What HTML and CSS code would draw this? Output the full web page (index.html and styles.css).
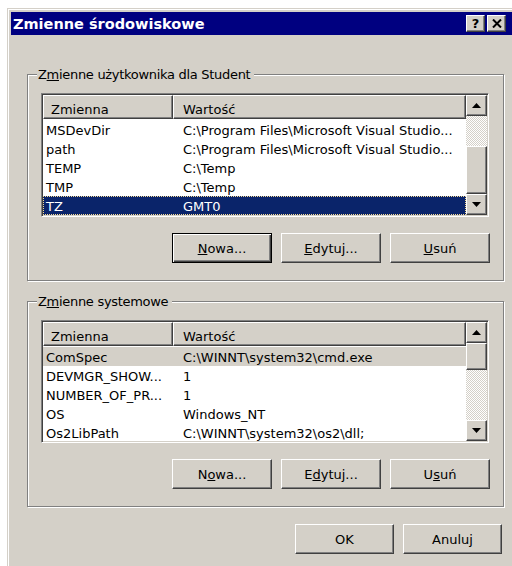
FILE: index.html
```html
<!DOCTYPE html>
<html lang="pl">
<head>
<meta charset="utf-8">
<title>Zmienne środowiskowe</title>
<link rel="stylesheet" href="styles.css">
</head>
<body>
<div class="window">
  <div class="titlebar">
    <span class="title">Zmienne środowiskowe</span>
    <div class="caption-buttons">
      <button class="cap">?</button>
      <button class="cap">
        <svg width="10" height="9" viewBox="0 0 10 9"><path d="M1 0.5 L9 8.5 M9 0.5 L1 8.5" stroke="#000" stroke-width="2" fill="none"/></svg>
      </button>
    </div>
  </div>

  <div class="client">
    <section class="group group-user">
      <div class="group-label">Z<u>m</u>ienne użytkownika dla Student</div>
      <div class="listview">
        <div class="lv-main">
          <div class="lv-header">
            <div class="hd c1">Zmienna</div>
            <div class="hd c2">Wartość</div>
          </div>
          <div class="lv-rows">
            <div class="row"><span class="c1">MSDevDir</span><span class="c2">C:\Program Files\Microsoft Visual Studio...</span></div>
            <div class="row"><span class="c1">path</span><span class="c2">C:\Program Files\Microsoft Visual Studio...</span></div>
            <div class="row"><span class="c1">TEMP</span><span class="c2">C:\Temp</span></div>
            <div class="row"><span class="c1">TMP</span><span class="c2">C:\Temp</span></div>
            <div class="row selected"><span class="c1">TZ</span><span class="c2">GMT0</span></div>
          </div>
        </div>
        <div class="vscroll">
          <div class="sb-btn"><svg width="9" height="5" viewBox="0 0 9 5"><path d="M4.5 0 L9 5 L0 5 Z" fill="#000"/></svg></div>
          <div class="sb-track"></div>
          <div class="sb-thumb thumb-user"></div>
          <div class="sb-btn"><svg width="9" height="5" viewBox="0 0 9 5"><path d="M0 0 L9 0 L4.5 5 Z" fill="#000"/></svg></div>
        </div>
      </div>
      <div class="btn-row">
        <button class="btn default"><u>N</u>owa...</button>
        <button class="btn"><u>E</u>dytuj...</button>
        <button class="btn"><u>U</u>suń</button>
      </div>
    </section>

    <section class="group group-system">
      <div class="group-label">Z<u>m</u>ienne systemowe</div>
      <div class="listview listview-system">
        <div class="lv-main">
          <div class="lv-header">
            <div class="hd c1">Zmienna</div>
            <div class="hd c2">Wartość</div>
          </div>
          <div class="lv-rows">
            <div class="row inactive"><span class="c1">ComSpec</span><span class="c2">C:\WINNT\system32\cmd.exe</span></div>
            <div class="row"><span class="c1">DEVMGR_SHOW...</span><span class="c2">1</span></div>
            <div class="row"><span class="c1">NUMBER_OF_PR...</span><span class="c2">1</span></div>
            <div class="row"><span class="c1">OS</span><span class="c2">Windows_NT</span></div>
            <div class="row"><span class="c1">Os2LibPath</span><span class="c2">C:\WINNT\system32\os2\dll;</span></div>
          </div>
        </div>
        <div class="vscroll">
          <div class="sb-btn"><svg width="9" height="5" viewBox="0 0 9 5"><path d="M4.5 0 L9 5 L0 5 Z" fill="#000"/></svg></div>
          <div class="sb-thumb thumb-system"></div>
          <div class="sb-track"></div>
          <div class="sb-btn"><svg width="9" height="5" viewBox="0 0 9 5"><path d="M0 0 L9 0 L4.5 5 Z" fill="#000"/></svg></div>
        </div>
      </div>
      <div class="btn-row">
        <button class="btn">N<u>o</u>wa...</button>
        <button class="btn">E<u>d</u>ytuj...</button>
        <button class="btn">U<u>s</u>uń</button>
      </div>
    </section>

    <div class="dialog-buttons">
      <button class="btn btn-dialog">OK</button>
      <button class="btn btn-dialog">Anuluj</button>
    </div>
  </div>
</div>
</body>
</html>
```
FILE: styles.css
```css
html, body {
  margin: 0;
  padding: 0;
  width: 512px;
  height: 566px;
  overflow: hidden;
  background: #fff;
}

body {
  font-family: "DejaVu Sans", Verdana, sans-serif;
  font-size: 13px;
  color: #000;
}

/* dialog frame */
.window {
  box-sizing: border-box;
  margin: 8px 0 0 7px;
  width: 510px;
  height: 580px;
  padding: 3px;
  background: #d4d0c8;
  border: 1px solid;
  border-color: #d4d0c8 #404040 #404040 #d4d0c8;
  box-shadow: inset 1px 1px #fff, inset -1px -1px #808080;
  display: flex;
  flex-direction: column;
}

.titlebar {
  height: 23px;
  flex: none;
  background: #000080;
  color: #fff;
  display: flex;
  align-items: flex-start;
  padding: 0 7px 0 2px;
}

.title {
  flex: 1;
  font-weight: bold;
  font-size: 14.5px;
  line-height: 21px;
  padding-top: 2px;
  white-space: nowrap;
}

.caption-buttons {
  display: flex;
  gap: 2px;
  margin-top: 3px;
}

.cap {
  width: 19px;
  height: 17px;
  box-sizing: border-box;
  padding: 0;
  background: #d4d0c8;
  border: 1px solid;
  border-color: #fff #404040 #404040 #fff;
  box-shadow: inset -1px -1px #808080;
  display: flex;
  align-items: center;
  justify-content: center;
  font: bold 13px "DejaVu Sans", sans-serif;
  color: #000;
}

.client {
  flex: 1;
  padding-left: 16px;
  display: flex;
  flex-direction: column;
  align-items: flex-start;
}

/* etched group boxes */
.group {
  width: 477px;
  box-sizing: border-box;
  border: 1px solid #808080;
  box-shadow: inset 1px 1px #fff, 1px 1px #fff;
  padding: 0 13px 17px 13px;
}

.group-user { margin-top: 39px; }
.group-system { margin-top: 20px; }

.group-label {
  width: max-content;
  margin: -8px 0 0 -4px;
  padding: 0 4px 0 1px;
  line-height: 15px;
  letter-spacing: -0.3px;
  background: #d4d0c8;
  white-space: nowrap;
}

/* list views */
.listview {
  margin-top: 11px;
  width: 448px;
  height: 124px;
  box-sizing: border-box;
  padding: 1px;
  background: #fff;
  border: 1px solid;
  border-color: #808080 #fff #fff #808080;
  box-shadow: inset 1px 1px #404040, inset -1px -1px #d4d0c8;
  display: flex;
}

.listview-system { height: 123px; }

.lv-main {
  flex: 1;
  display: flex;
  flex-direction: column;
  min-width: 0;
}

.lv-header {
  display: flex;
  height: 24px;
  flex: none;
}

.hd {
  box-sizing: border-box;
  background: #d4d0c8;
  border: 1px solid;
  border-color: #fff #404040 #404040 #fff;
  box-shadow: inset -1px -1px #808080;
  padding: 5px 0 0 7px;
  line-height: 18px;
  white-space: nowrap;
}

.hd.c1 { width: 130px; }
.hd.c2 { flex: 1; padding-left: 9px; }

.lv-rows { padding-top: 1px; }

.row {
  display: flex;
  height: 19px;
  box-sizing: border-box;
  padding-top: 3px;
  line-height: 16px;
  white-space: nowrap;
}

.row .c1 {
  width: 140px;
  box-sizing: border-box;
  padding-left: 3px;
  flex: none;
}

.row .c2 { flex: 1; }

.row.selected {
  background: #0a246a;
  color: #fff;
  outline: 1px dotted #f5db95;
  outline-offset: -1px;
}

.row.inactive { background: #d4d0c8; }

/* vertical scrollbar */
.vscroll {
  width: 21px;
  flex: none;
  display: flex;
  flex-direction: column;
}

.sb-btn,
.sb-thumb {
  box-sizing: border-box;
  background: #d4d0c8;
  border: 1px solid;
  border-color: #fff #404040 #404040 #fff;
  box-shadow: inset -1px -1px #808080;
}

.sb-btn {
  height: 21px;
  flex: none;
  display: flex;
  align-items: center;
  justify-content: center;
}

.sb-track {
  flex: 1;
  background: repeating-conic-gradient(#fff 0% 25%, #d4d0c8 0% 50%) 0 0 / 2px 2px;
}

.thumb-user { height: 48px; flex: none; }
.thumb-system { height: 27px; flex: none; }

/* push buttons */
.btn-row {
  display: flex;
  justify-content: flex-end;
  gap: 9px;
  margin-top: 16px;
}

.btn {
  width: 100px;
  height: 30px;
  box-sizing: border-box;
  padding: 0;
  background: #d4d0c8;
  border: 1px solid;
  border-color: #fff #404040 #404040 #fff;
  box-shadow: inset -1px -1px #808080;
  font: 13px "DejaVu Sans", Verdana, sans-serif;
  color: #000;
}

.btn.default {
  border-color: #000;
  box-shadow: inset 1px 1px #fff, inset -1px -1px #404040, inset -2px -2px #808080;
}

.dialog-buttons {
  display: flex;
  justify-content: flex-end;
  gap: 9px;
  width: 475px;
  margin-top: 17px;
}

.btn-dialog { width: 99px; }
```
